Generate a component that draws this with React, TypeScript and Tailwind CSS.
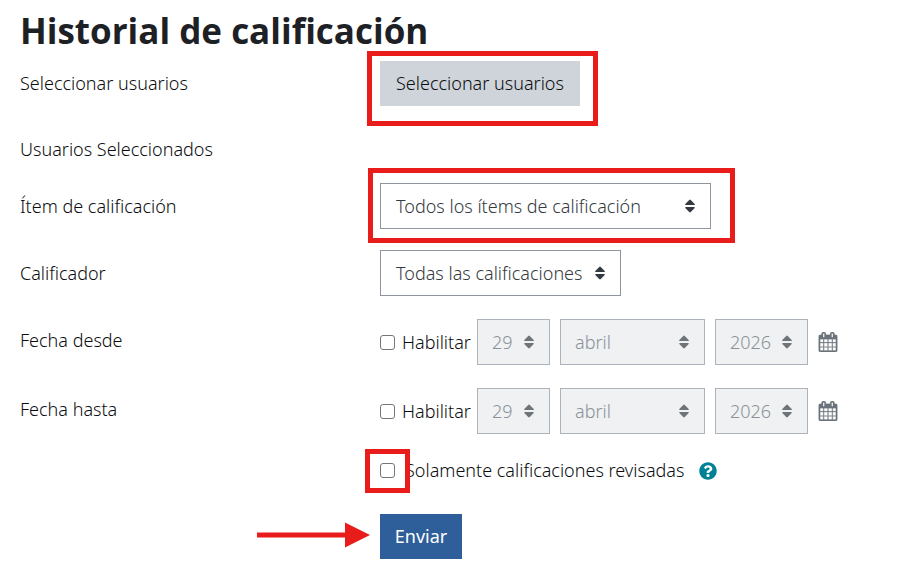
import type { ReactNode } from "react";
import { FaQuestionCircle } from "react-icons/fa";

function SortArrows({ className }: { className: string }) {
  return (
    <svg
      aria-hidden="true"
      viewBox="0 0 10 14"
      className={`pointer-events-none absolute top-1/2 right-4 h-3.5 w-2.5 -translate-y-1/2 ${className}`}
      fill="currentColor"
    >
      <path d="M4.200 1Q5 .2 5.800 1L9.700 5Q10.200 6 9 6H1Q-.2 6 .3 5Z" />
      <path d="M4.200 13Q5 13.800 5.800 13L9.700 9Q10.200 8 9 8H1Q-.2 8 .3 9Z" />
    </svg>
  );
}

function CalendarIcon() {
  return (
    <svg aria-hidden="true" viewBox="64 0 1664 1792" className="h-5 w-5" fill="currentColor" stroke="currentColor" strokeWidth="24">
      <path d="M192 1664h288v-288h-288v288zm352 0h320v-288h-320v288zm-352-352h288v-320h-288v320zm352 0h320v-320h-320v320zm-352-384h288v-288h-288v288zm736 736h320v-288h-320v288zm-384-736h320v-288h-320v288zm768 736h288v-288h-288v288zm-384-352h320v-320h-320v320zm-352-864v-288q0-13-9.500-22.500t-22.500-9.500h-64q-13 0-22.500 9.500t-9.500 22.500v288q0 13 9.500 22.500t22.500 9.500h64q13 0 22.500-9.500t9.500-22.500zm736 864h288v-320h-288v320zm-384-384h320v-288h-320v288zm384 0h288v-288h-288v288zm32-480v-288q0-13-9.500-22.500t-22.500-9.500h-64q-13 0-22.500 9.500t-9.500 22.500v288q0 13 9.500 22.500t22.500 9.500h64q13 0 22.500-9.500t9.500-22.500zm384-64v1280q0 52-38 90t-90 38h-1408q-52 0-90-38t-38-90v-1280q0-52 38-90t90-38h128v-96q0-66 47-113t113-47h64q66 0 113 47t47 113v96h384v-96q0-66 47-113t113-47h64q66 0 113 47t47 113v96h128q52 0 90 38t38 90z" />
    </svg>
  );
}

function Select({ id, label, value, width, disabled }: { id: string; label?: string; value: string; width: string; disabled?: boolean }) {
  return (
    <div className={`relative shrink-0 ${width}`}>
      <select
        id={id}
        aria-label={label}
        disabled={disabled}
        className={`h-[46px] w-full appearance-none border opacity-100 ${
          disabled ? "border-[#adb3ba] bg-[#eff1f3] pl-3.5 text-[#8b9197]" : "border-[#8f959e] bg-white pl-[15px] text-[#343a40]"
        }`}
      >
        <option>{value}</option>
      </select>
      <SortArrows className={disabled ? "text-[#6f7479]" : "text-[#343a40]"} />
    </div>
  );
}

function Checkbox({ id }: { id: string }) {
  return (
    <input id={id} type="checkbox" className="block h-[15px] w-[15px] shrink-0 appearance-none rounded-[3px] border border-[#767676] bg-white checked:bg-[#0f6cbf]" />
  );
}

function Row({ label, htmlFor, className, children }: { label?: string; htmlFor?: string; className: string; children?: ReactNode }) {
  return (
    <div className={`grid grid-cols-[360px_1fr] ${className}`}>
      {htmlFor ? <label htmlFor={htmlFor}>{label}</label> : <span>{label}</span>}
      <div className="flex items-center">{children}</div>
    </div>
  );
}

function DateFields({ id, name }: { id: string; name: string }) {
  return (
    <>
      <Checkbox id={id} />
      <label htmlFor={id} className="w-[82px] pl-[7px]">Habilitar</label>
      <div className="flex items-center gap-2.5">
        <Select id={`${id}-day`} label={`${name}: día`} value="29" width="w-[73px]" disabled />
        <Select id={`${id}-month`} label={`${name}: mes`} value="abril" width="w-[145px]" disabled />
        <Select id={`${id}-year`} label={`${name}: año`} value="2026" width="w-[93px]" disabled />
        <a href="#" aria-label={`${name}: calendario`} className="text-[#6a737b]">
          <CalendarIcon />
        </a>
      </div>
    </>
  );
}

function Highlight({ className }: { className: string }) {
  return <div aria-hidden="true" className={`pointer-events-none absolute border-[5px] border-[#e91c1c] ${className}`} />;
}

export default function App() {
  return (
    <main className="min-h-screen bg-white px-5 pb-6 font-['Noto_Sans','Open_Sans',sans-serif] text-[18px] leading-[27px] font-[350] text-[#0b0d10]">
      <h1 className="pt-2 pb-2 font-['Open_Sans','Noto_Sans',sans-serif] text-[35px] leading-[45px] font-bold text-[#1d2125]">Historial de calificación</h1>
      <form onSubmit={(e) => e.preventDefault()}>
        <Row label="Seleccionar usuarios" className="mb-[30px] items-center">
          <div className="relative">
            <button type="button" className="block h-[45px] w-[200px] bg-[#ced4da]">Seleccionar usuarios</button>
            <Highlight className="-top-2.5 -left-[13px] h-[75px] w-[231px]" />
          </div>
        </Row>
        <Row label="Usuarios Seleccionados" className="mb-5 items-center" />
        <Row label="Ítem de calificación" htmlFor="item" className="mb-[21px] items-center">
          <div className="relative">
            <Select id="item" value="Todos los ítems de calificación" width="w-[331px]" />
            <Highlight className="-top-[15px] -left-3 h-[75px] w-[367px]" />
          </div>
        </Row>
        <Row label="Calificador" htmlFor="grader" className="mb-[23px] items-center">
          <Select id="grader" value="Todas las calificaciones" width="w-[241px]" />
        </Row>
        <Row label="Fecha desde" className="mb-[23px] items-start leading-[42px]">
          <DateFields id="from" name="Fecha desde" />
        </Row>
        <Row label="Fecha hasta" className="mb-[23px] items-start leading-[42px]">
          <DateFields id="till" name="Fecha hasta" />
        </Row>
        <Row className="mb-[30px] items-center">
          <div className="relative">
            <Checkbox id="revised" />
            <Highlight className="-top-3.5 -left-[15px] z-10 h-[44px] w-[45px]" />
          </div>
          <label htmlFor="revised" className="pl-2.5">Solamente calificaciones revisadas</label>
          <button type="button" aria-label="Ayuda" className="ml-[15px] text-[#008196]">
            <FaQuestionCircle className="h-[18px] w-[18px]" />
          </button>
        </Row>
        <Row className="items-center">
          <div className="relative">
            <svg aria-hidden="true" viewBox="0 0 113 26" className="absolute top-2 right-full mr-2.5 h-[26px] w-[113px]" fill="#e91c1c">
              <path d="M0 10.500H88V0.500L113 13 88 25.500V15.500H0Z" />
            </svg>
            <button type="submit" className="block h-[45px] w-[82px] bg-[#2f5f9b] font-normal text-white">Enviar</button>
          </div>
        </Row>
      </form>
    </main>
  );
}
